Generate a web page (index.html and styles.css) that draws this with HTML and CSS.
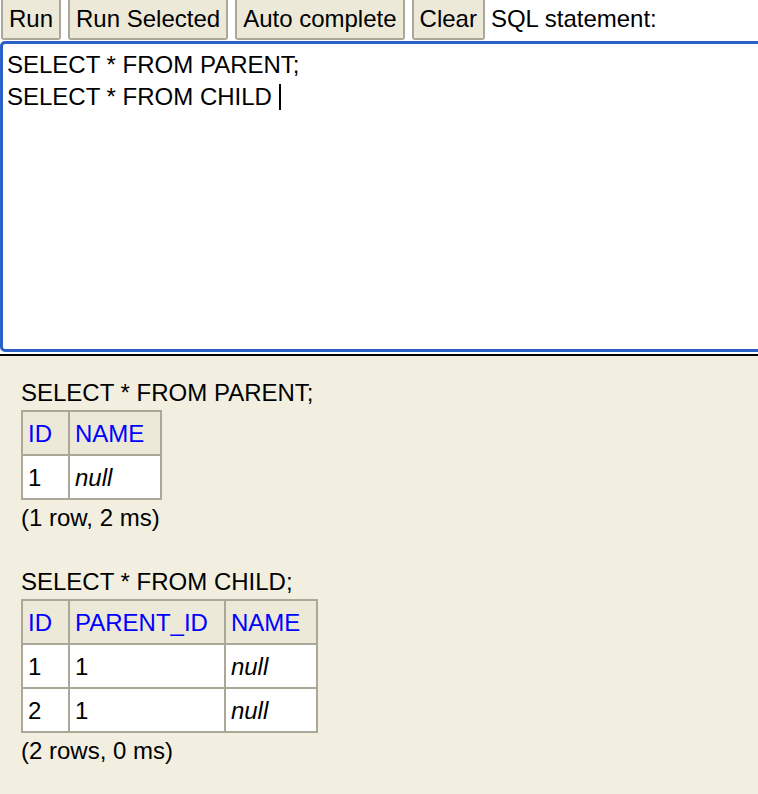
FILE: index.html
```html
<!DOCTYPE html>
<html>
<head>
<meta charset="utf-8">
<link rel="stylesheet" href="styles.css">
</head>
<body>
<div class="top">
  <div class="toolbar">
    <span class="btn">Run</span>
    <span class="btn">Run Selected</span>
    <span class="btn">Auto complete</span>
    <span class="btn">Clear</span>
    <span class="label">SQL statement:</span>
  </div>
  <div class="editor">
    <div class="line">SELECT * FROM PARENT;</div>
    <div class="line">SELECT * FROM CHILD <span class="caret"></span></div>
  </div>
</div>
<div class="sep"></div>
<div class="result">
  <div class="caption">SELECT * FROM PARENT;</div>
  <table class="grid">
    <tr><th>ID</th><th>NAME</th></tr>
    <tr><td>1</td><td><i>null</i></td></tr>
  </table>
  <div class="foot">(1 row, 2 ms)</div>

  <div class="caption second">SELECT * FROM CHILD;</div>
  <table class="grid">
    <tr><th>ID</th><th>PARENT_ID</th><th>NAME</th></tr>
    <tr><td>1</td><td>1</td><td><i>null</i></td></tr>
    <tr><td>2</td><td>1</td><td><i>null</i></td></tr>
  </table>
  <div class="foot">(2 rows, 0 ms)</div>
</div>
</body>
</html>
```
FILE: styles.css
```css
html, body {
  margin: 0;
  padding: 0;
  overflow: hidden;
  height: 794px;
  background: #f2efe1;
  font-family: "Liberation Sans", Arial, sans-serif;
  font-size: 24px;
  color: #000;
}
.top {
  background: #fff;
  width: 758px;
  overflow: hidden;
}
.toolbar {
  display: flex;
  align-items: flex-start;
  height: 41px;
  padding-left: 1px;
  gap: 7px;
  white-space: nowrap;
}
.btn {
  display: block;
  background: #ece9d8;
  border: 2px solid #aca899;
  border-top: none;
  border-radius: 0 0 3px 3px;
  padding: 5px 6px 6px 6px;
  line-height: 27px;
}
.label {
  display: block;
  padding-top: 5px;
  line-height: 27px;
  margin-left: -1px;
}
.editor {
  width: 800px;
  border: 3px solid #2b60c7;
  border-radius: 5px;
  background: #fff;
  padding: 5px 4px 0 4px;
  box-sizing: border-box;
  height: 311px;
  line-height: 32.3px;
}
.line {
  white-space: pre;
}
.caret {
  display: inline-block;
  width: 2px;
  height: 26px;
  background: #000;
  vertical-align: -5px;
}
.sep {
  height: 2px;
  background: #fff;
  border-bottom: 2px solid #000;
}
.result {
  padding: 23px 0 0 21px;
  line-height: 27px;
}
.caption {
  margin-bottom: 4px;
}
.caption.second {
  margin-top: 37px;
}
.grid {
  border-collapse: collapse;
}
.grid th, .grid td {
  border: 2px solid #aca899;
  padding: 8px 16px 7px 5px;
  text-align: left;
  font-weight: normal;
  line-height: 27px;
  white-space: nowrap;
}
.grid th {
  background: #ece9d8;
  color: #0000ff;
}
.grid td {
  background: #fff;
}
.foot {
  margin-top: 4px;
}
```
